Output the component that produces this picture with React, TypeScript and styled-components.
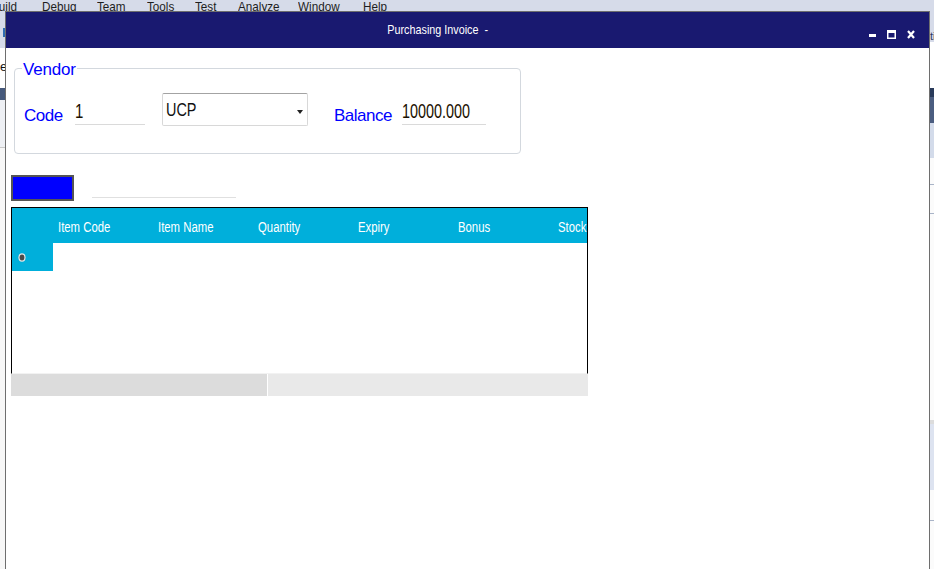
import React from "react";
import styled, { createGlobalStyle } from "styled-components";

const Global = createGlobalStyle`
  html, body { margin: 0; padding: 0; width: 934px; height: 569px; overflow: hidden; background: #f7f7f7; }
  #root { width: 934px; height: 569px; }
`;

const SANS = `"Liberation Sans", Arial, sans-serif`;

const Desktop = styled.div`
  position: relative;
  width: 934px;
  height: 569px;
  overflow: hidden;
  font-family: ${SANS};
  display: flex;
  flex-direction: column;
  background: #f7f7f7;
`;

/* condensed text: the screenshot's fonts are horizontally narrow */
const Narrow = styled.span<{ $s?: number; $origin?: string }>`
  display: inline-block;
  white-space: pre;
  transform: scaleX(${(p) => p.$s ?? 0.81});
  transform-origin: ${(p) => p.$origin ?? "left"} center;
`;

const MenuBar = styled.div`
  height: 14px;
  background: #d6dbe9;
  display: flex;
  font-size: 13px;
  line-height: 14px;
  color: #1e1e1e;
  white-space: nowrap;
  overflow: hidden;
`;

const MenuItem = styled.div<{ $w: number; $ml?: number }>`
  flex: 0 0 ${(p) => p.$w}px;
  margin-left: ${(p) => p.$ml ?? 0}px;
`;

const IdeBody = styled.div`
  flex: 1;
  display: flex;
  justify-content: space-between;
`;

const Strip = styled.div<{ $w: number }>`
  width: ${(p) => p.$w}px;
  display: flex;
  flex-direction: column;
  overflow: hidden;
`;

const Band = styled.div<{ $h: number; $bg: string; $grow?: boolean }>`
  flex: ${(p) => (p.$grow ? "1 1 auto" : `0 0 ${p.$h}px`)};
  background: ${(p) => p.$bg};
  font-size: 13px;
  line-height: ${(p) => p.$h}px;
  color: #111;
  white-space: nowrap;
  text-align: right;
  overflow: hidden;
`;

const BandRight = styled(Band)`
  text-align: left;
  color: #2b3b66;
  font-size: 11px;
`;

const Window = styled.div`
  position: absolute;
  left: 5px;
  top: 11px;
  width: 925px;
  height: 558px;
  box-sizing: border-box;
  border: 1px solid #6e6e6e;
  border-bottom: none;
  background: #ffffff;
  display: flex;
  flex-direction: column;
`;

const TitleBar = styled.div`
  flex: 0 0 36px;
  background: #191970;
  display: flex;
  color: #ffffff;
`;

const Title = styled.div`
  flex: 1;
  text-align: center;
  font-size: 13px;
  line-height: 36px;
`;

const Controls = styled.div`
  display: flex;
  align-items: flex-start;
  padding: 18px 14px 0 0;
  gap: 11px;
`;

const Content = styled.div`
  flex: 1;
  display: flex;
  flex-direction: column;
  align-items: flex-start;
`;

const GroupBox = styled.div`
  position: relative;
  margin: 20px 0 0 8px;
  width: 507px;
  height: 86px;
  box-sizing: border-box;
  border: 1px solid #d3d8de;
  border-radius: 4px;
  padding: 23px 0 0 9px;
`;

const Legend = styled.div`
  position: absolute;
  left: 7px;
  top: -8px;
  padding: 0 1px;
  background: #ffffff;
  color: #0000ff;
  font-size: 17px;
  line-height: 17px;
  letter-spacing: -0.2px;
`;

const FieldRow = styled.div`
  display: flex;
  align-items: flex-start;
`;

const Label = styled.div<{ $w: number; $ml?: number }>`
  flex: 0 0 ${(p) => p.$w}px;
  margin-left: ${(p) => p.$ml ?? 0}px;
  margin-top: 14px;
  color: #0000ff;
  font-size: 17px;
  line-height: 20px;
  letter-spacing: -0.5px;
  white-space: nowrap;
`;

const Field = styled.div<{ $w: number }>`
  flex: 0 0 ${(p) => p.$w}px;
  margin-top: 8px;
  font-size: 20px;
  line-height: 22px;
  padding-bottom: 2px;
  border-bottom: 1px solid #dadada;
  color: #1b1000;
  overflow: hidden;
`;

const Combo = styled.div`
  flex: 0 0 146px;
  margin: 1px 0 0 17px;
  height: 33px;
  box-sizing: border-box;
  border: 1px solid #d8d8d8;
  border-top-color: #a3a3a3;
  border-radius: 2px;
  padding: 0 4px 0 3px;
  display: flex;
  align-items: center;
  justify-content: space-between;
  font-size: 19px;
  line-height: 22px;
  color: #111111;
`;

const Arrow = styled.svg`
  margin-top: 4px;
`;

const ButtonRow = styled.div`
  margin: 21px 0 0 5px;
  display: flex;
  align-items: flex-end;
`;

const BlueButton = styled.div`
  width: 63px;
  height: 26px;
  box-sizing: border-box;
  border: 2px solid #555555;
  background: #0000ff;
`;

const Underline = styled.div`
  margin: 0 0 3px 18px;
  width: 144px;
  height: 1px;
  background: #e0e0e0;
`;

const GridFrame = styled.div`
  margin: 6px 0 0 5px;
  width: 577px;
  height: 167px;
  box-sizing: border-box;
  border: 1px solid #000000;
  border-bottom: 1px solid #f2f2f2;
  overflow: hidden;
  background: #ffffff;
`;

const HeaderRow = styled.div`
  height: 35px;
  background: #00afdb;
  display: flex;
  align-items: center;
`;

const Corner = styled.div`
  flex: 0 0 41px;
`;

const HeaderCell = styled.div`
  flex: 0 0 100px;
  box-sizing: border-box;
  padding: 3px 0 0 5px;
  color: #ffffff;
  font-size: 14px;
  line-height: 16px;
  white-space: nowrap;
`;

const DataRow = styled.div`
  height: 28px;
  display: flex;
`;

const RowHeader = styled.div`
  flex: 0 0 41px;
  background: #00afdb;
  display: flex;
  align-items: center;
  padding-left: 6px;
  box-sizing: border-box;
`;

const ScrollBar = styled.div`
  margin-left: 5px;
  width: 577px;
  height: 22px;
  display: flex;
  gap: 1px;
  background: #ffffff;
`;

const Thumb = styled.div`
  flex: 0 0 256px;
  background: #dcdcdc;
`;

const Track = styled.div`
  flex: 1;
  background: #e9e9e9;
`;

const menu: [string, number, number?][] = [
  ["Build", 51, -9],
  ["Debug", 55],
  ["Team", 50],
  ["Tools", 48],
  ["Test", 43],
  ["Analyze", 60],
  ["Window", 65],
  ["Help", 50],
];

const columns = ["Item Code", "Item Name", "Quantity", "Expiry", "Bonus", "Stock"];

export default function App() {
  return (
    <>
      <Global />
      <Desktop>
        <MenuBar>
          {menu.map(([t, w, ml]) => (
            <MenuItem key={t} $w={w} $ml={ml}>
              <Narrow $s={0.9}>{t}</Narrow>
            </MenuItem>
          ))}
        </MenuBar>
        <IdeBody>
          <Strip $w={5}>
            <Band $h={14} $bg="#d6dbe9" />
            <Band $h={9} $bg="linear-gradient(to right, #d6dbe9 3px, #2f6db3 3px)" />
            <Band $h={11} $bg="#d6dbe9" />
            <Band $h={10} $bg="#ffffff" />
            <Band $h={18} $bg="#ffffff">e</Band>
            <Band $h={12} $bg="#ffffff" />
            <Band $h={12} $bg="#46597b" />
            <Band $h={47} $bg="#eef0f4" />
            <Band $h={1} $bg="#c8c8c8" />
            <Band $h={1} $bg="#f7f7f7" $grow />
          </Strip>
          <Strip $w={4}>
            <Band $h={16} $bg="#d6dbe9" />
            <BandRight $h={12} $bg="#d6dbe9">ti</BandRight>
            <Band $h={46} $bg="#ffffff" />
            <Band $h={9} $bg="#293a5a" />
            <Band $h={26} $bg="#4b5d80" />
            <Band $h={35} $bg="#d3dbea" />
            <Band $h={26} $bg="#fbfbfb" />
            <Band $h={1} $bg="#a9b4c8" />
            <Band $h={28} $bg="#fbfbfb" />
            <Band $h={1} $bg="#a9b4c8" />
            <Band $h={206} $bg="#fbfbfb" />
            <Band $h={4} $bg="#dcdcdc" />
            <Band $h={66} $bg="#dde3f0" />
            <Band $h={30} $bg="#fbfbfb" />
            <Band $h={1} $bg="#a9b4c8" />
            <Band $h={1} $bg="#fbfbfb" $grow />
          </Strip>
        </IdeBody>

        <Window>
          <TitleBar>
            <Title>
              <Narrow $s={0.83} $origin="center">
                {"Purchasing Invoice  -"}
              </Narrow>
            </Title>
            <Controls>
              <svg width="7" height="9" viewBox="0 0 7 9">
                <rect x="0" y="4" width="7" height="3" fill="#fff" />
              </svg>
              <svg width="9" height="9" viewBox="0 0 9 9">
                <rect x="0" y="0" width="9" height="3" fill="#fff" />
                <rect x="0" y="0" width="1.5" height="9" fill="#fff" />
                <rect x="7.5" y="0" width="1.5" height="9" fill="#fff" />
                <rect x="0" y="7.5" width="9" height="1.5" fill="#fff" />
              </svg>
              <svg width="8" height="9" viewBox="0 0 8 9">
                <path d="M1 1 L7 8 M7 1 L1 8" stroke="#fff" strokeWidth="2.2" />
              </svg>
            </Controls>
          </TitleBar>
          <Content>
            <GroupBox>
              <Legend>Vendor</Legend>
              <FieldRow>
                <Label $w={51}>Code</Label>
                <Field $w={70}>
                  <Narrow $s={0.75}>1</Narrow>
                </Field>
                <Combo>
                  <Narrow $s={0.76}>UCP</Narrow>
                  <Arrow width="6" height="4" viewBox="0 0 6 4">
                    <path d="M0 0 H6 L3 4 Z" fill="#222" />
                  </Arrow>
                </Combo>
                <Label $w={68} $ml={26}>
                  Balance
                </Label>
                <Field $w={84}>
                  <Narrow $s={0.72}>10000.000</Narrow>
                </Field>
              </FieldRow>
            </GroupBox>

            <ButtonRow>
              <BlueButton />
              <Underline />
            </ButtonRow>

            <GridFrame>
              <HeaderRow>
                <Corner />
                {columns.map((c) => (
                  <HeaderCell key={c}>
                    <Narrow>{c}</Narrow>
                  </HeaderCell>
                ))}
              </HeaderRow>
              <DataRow>
                <RowHeader>
                  <svg width="8" height="9" viewBox="0 0 8 9">
                    <ellipse cx="4" cy="4.5" rx="3.6" ry="4.2" fill="#e6e6e6" />
                    <ellipse cx="4" cy="4.5" rx="2.4" ry="3" fill="#4a4a4a" />
                  </svg>
                </RowHeader>
              </DataRow>
            </GridFrame>
            <ScrollBar>
              <Thumb />
              <Track />
            </ScrollBar>
          </Content>
        </Window>
      </Desktop>
    </>
  );
}
